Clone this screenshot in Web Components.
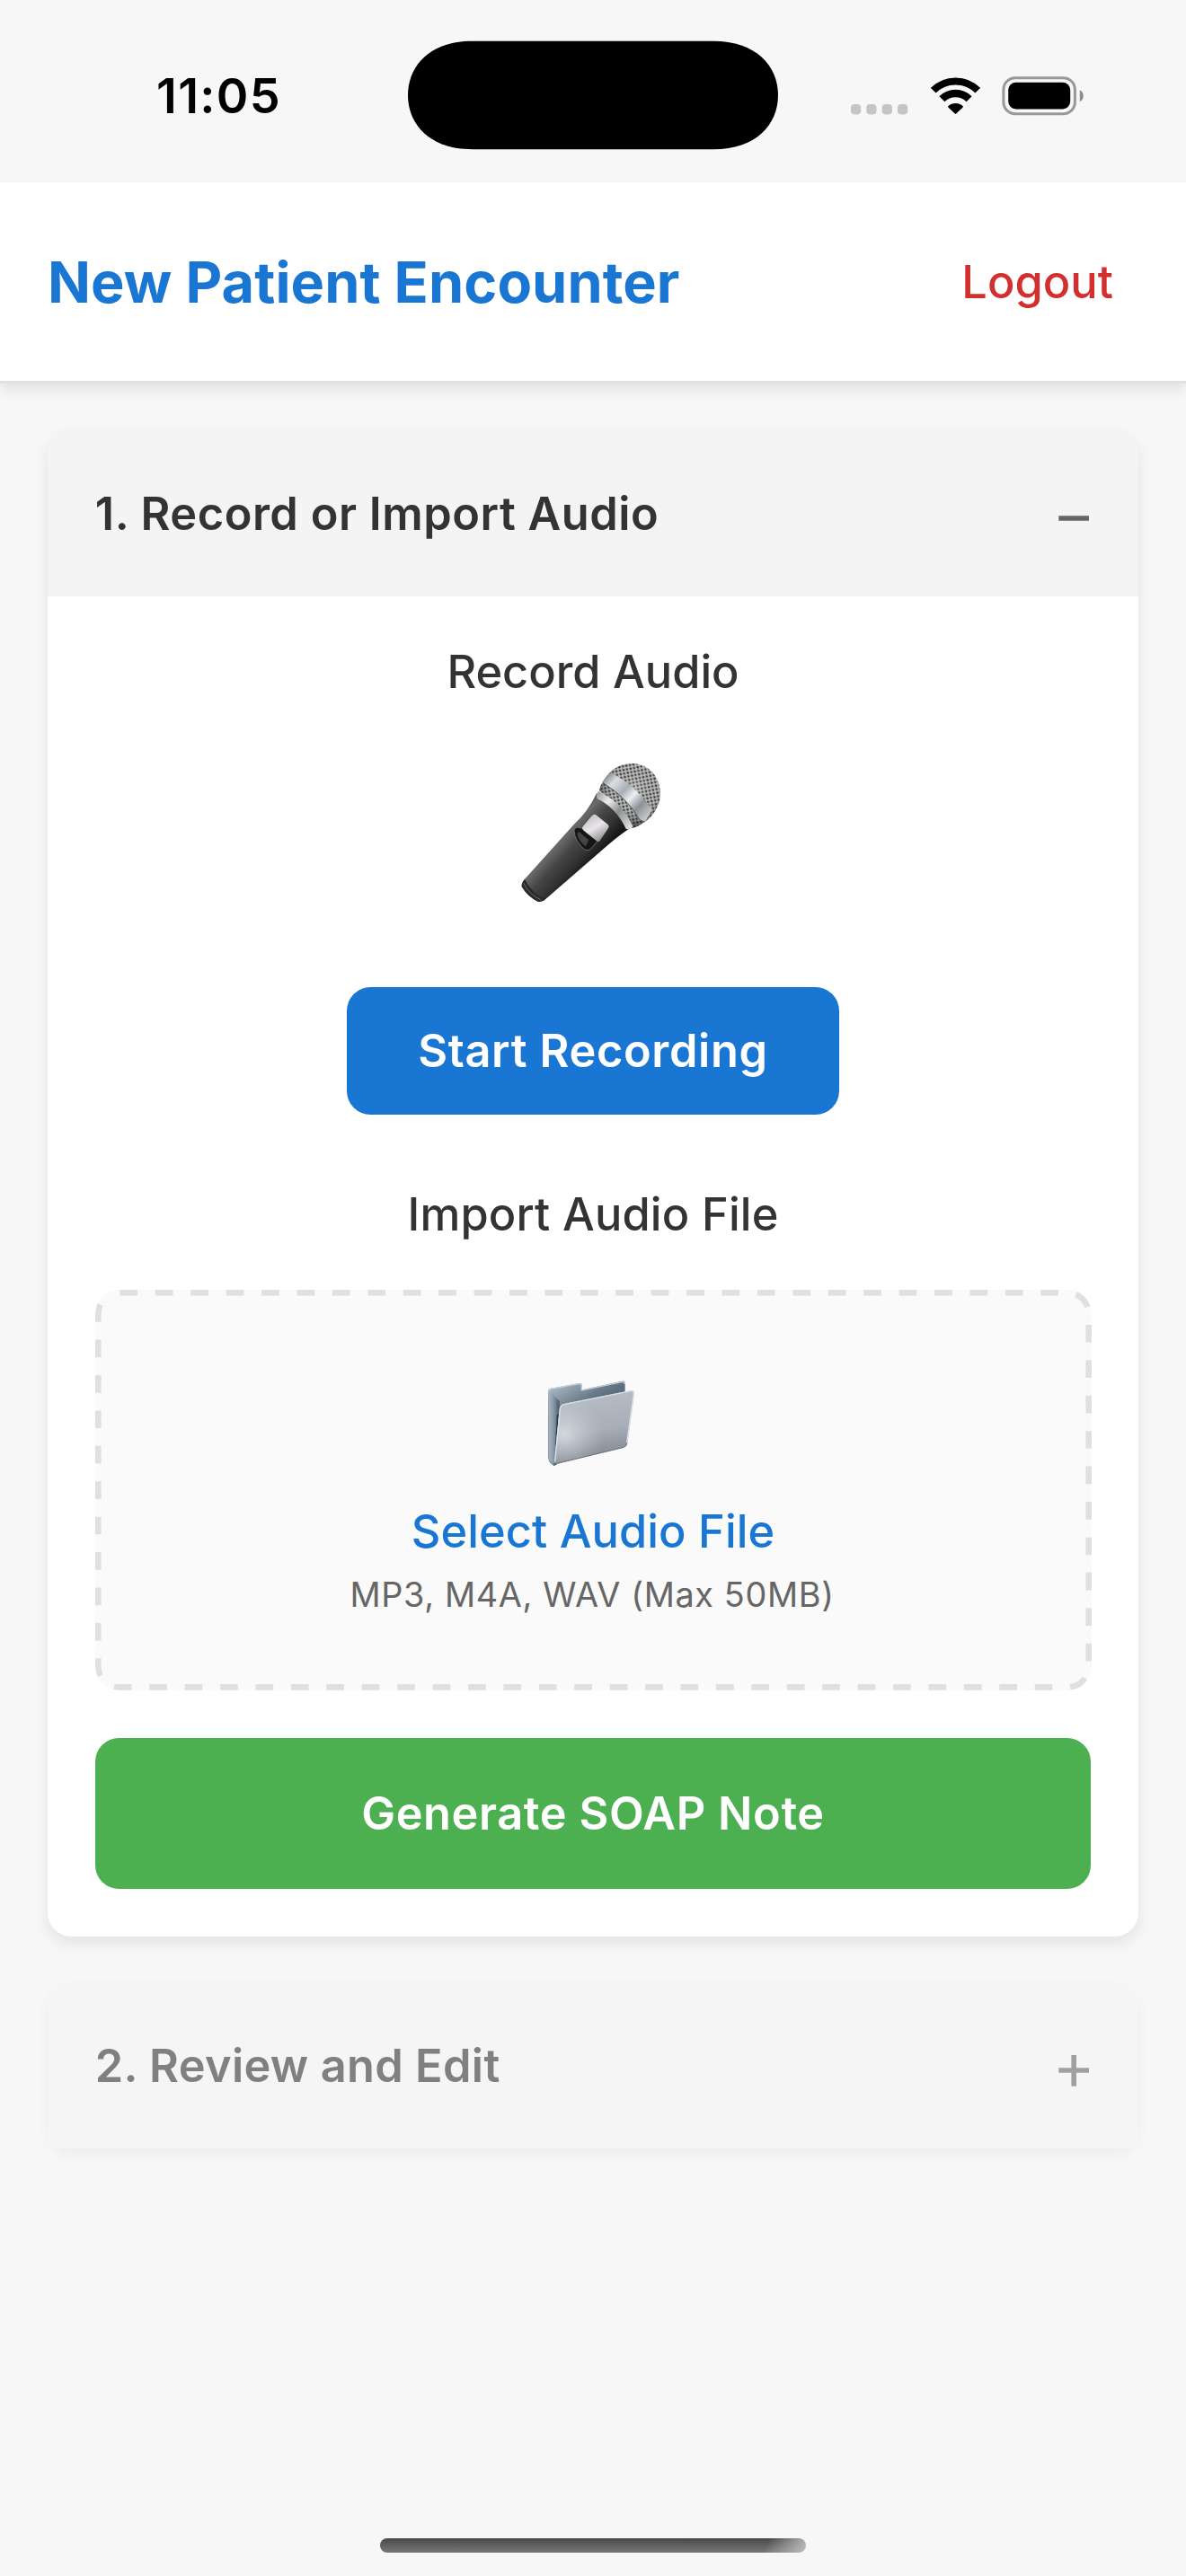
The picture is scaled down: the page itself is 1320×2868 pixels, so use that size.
<!DOCTYPE html>
<html lang="en">
<head>
<meta charset="utf-8">
<title>New Patient Encounter</title>
<style>
html, body { margin: 0; padding: 0; }
body { background: #f7f7f7; font-family: Inter, "Liberation Sans", sans-serif; width: 1320px; height: 2868px; overflow: hidden; }
</style>
</head>
<body>
<encounter-screen></encounter-screen>
<script>
const define = (name, html) => {
  const template = document.createElement('template');
  template.innerHTML = html;
  customElements.define(name, class extends HTMLElement {
    constructor() {
      super();
      this.attachShadow({ mode: 'open' }).append(template.content.cloneNode(true));
    }
  });
};

define('status-bar', `
<style>
:host { display: flex; height: 203px; box-sizing: border-box; align-items: flex-start; flex: none; }
.time { width: 280px; padding: 74px 0 0 174px; box-sizing: border-box; height: 203px; font-size: 54px; font-weight: 600; letter-spacing: 1.32px; line-height: 66px; color: #000; white-space: nowrap; }
.island { margin: 45px 0 0 173px; display: block; }
.icons { display: flex; align-items: flex-start; margin: 85px 0 0 80px; }
svg { display: block; flex: none; }
.dots { margin-top: 31px; }
.wifi { margin: 1px 0 0 25px; }
.battery { margin-left: 24px; }
</style>
<div class="time">11:05</div>
<svg class="island" width="414" height="122" viewBox="0 0 414 122"><path d="M73 .7H341C388 .7 413 28 413 61S388 121.3 341 121.3H73C26 121.3 1 94 1 61S26 .7 73 .7Z" fill="#000"/></svg>
<div class="icons">
<svg class="dots" width="64" height="12" viewBox="0 0 64 12" fill="#c5c5c5"><rect x="0" y="0" width="11.2" height="11.4" rx="3.8"/><rect x="17.3" y="0" width="11.2" height="11.4" rx="3.8"/><rect x="34.7" y="0" width="11.2" height="11.4" rx="3.8"/><rect x="52" y="0" width="11.2" height="11.4" rx="3.8"/></svg>
<svg class="wifi" width="55" height="42" viewBox="0 0 55 42"><g fill="none" stroke="#000"><path d="M2.8 14.7A34.9 34.9 0 0 1 52.2 14.7" stroke-width="8"/><path d="M12.4 24.3A21.3 21.3 0 0 1 42.6 24.3" stroke-width="8.4"/></g><path d="M19.2 32.2A12.2 12.2 0 0 1 35.8 32.2Q36 33 35.4 33.7L28.2 40.6Q27.5 41.3 26.8 40.6L19.6 33.7Q19 33 19.2 32.2Z"/></svg>
<svg class="battery" width="92" height="44" viewBox="0 0 92 44"><rect x="1.9" y="1.7" width="79.5" height="40" rx="13" fill="none" stroke="#989898" stroke-width="3"/><rect x="7.2" y="6.7" width="69" height="29.8" rx="8.5"/><path d="M86.8 15.2Q90.7 17.2 90.7 21.7T86.8 28.2Z" fill="#8c8c8c"/></svg>
</div>`);

define('app-header', `
<style>
:host { display: flex; align-items: center; justify-content: space-between; height: 224.4px; box-sizing: border-box; padding: 1px 81px 0 53px; background: #fff; border-bottom: 3.3px solid #e0e0e0; box-shadow: 0 6.6px 14px rgba(0,0,0,.09); flex: none; }
h1 { margin: 0; color: #1976d2; font-size: 63px; font-weight: 700; line-height: 80px; letter-spacing: .08px; }
.action { color: #d32f2f; font-size: 50.5px; font-weight: 500; line-height: 60px; letter-spacing: .05px; }
</style>
<h1><slot></slot></h1><span class="action"><slot name="action"></slot></span>`);

define('step-card', `
<style>
:host { display: block; background: #fff; border-radius: 26.4px; box-shadow: 0 6.6px 17px rgba(0,0,0,.085); }
header { display: flex; align-items: center; justify-content: space-between; height: 184px; box-sizing: border-box; padding: 1px 52px 0 53px; background: #f4f4f4; border-radius: 26.4px 26.4px 0 0; }
h2 { margin: 0; color: #333; font-size: 50.5px; font-weight: 600; line-height: 60px; letter-spacing: var(--title-spacing, .52px); }
svg { display: block; margin-top: 10px; }
.plus { display: none; }
:host([locked]) { background: none; box-shadow: 0 6.6px 15px rgba(0,0,0,.045); }
:host([locked]) header { background: #f5f5f5; height: 185px; padding-top: 2px; border-radius: 26.4px 26.4px 8px 8px; }
:host([locked]) h2 { color: #808080; --title-spacing: .33px; }
:host([locked]) .plus { display: inline; }
.sign { stroke: #666; }
:host([locked]) .sign { stroke: #a0a0a0; }
</style>
<header><h2><slot name="title"></slot></h2>
<svg class="sign" width="40" height="40" viewBox="0 0 40 40" fill="none" stroke-width="5.6"><path d="M3.3 20H37"/><path class="plus" d="M20.2 3V37.7"/></svg></header>
<slot></slot>`);

define('mic-icon', `
<style>:host { display: block; } svg { display: block; }</style>
<svg width="200" height="200" viewBox="0 0 600 600">
<defs>
<linearGradient id="body" x1="170" y1="330" x2="285" y2="435" gradientUnits="userSpaceOnUse"><stop offset="0" stop-color="#454745"/><stop offset=".18" stop-color="#6a6c6a"/><stop offset=".45" stop-color="#454545"/><stop offset=".72" stop-color="#343333"/><stop offset="1" stop-color="#151515"/></linearGradient>
<linearGradient id="metal" x1="335" y1="130" x2="480" y2="270" gradientUnits="userSpaceOnUse"><stop offset="0" stop-color="#75797e"/><stop offset=".2" stop-color="#d9dee2"/><stop offset=".42" stop-color="#a9afb6"/><stop offset=".58" stop-color="#eceff3"/><stop offset=".78" stop-color="#8c9095"/><stop offset="1" stop-color="#c5c7ca"/></linearGradient>
<linearGradient id="collar" x1="310" y1="190" x2="425" y2="300" gradientUnits="userSpaceOnUse"><stop offset="0" stop-color="#999"/><stop offset=".3" stop-color="#eee"/><stop offset=".6" stop-color="#8b8e92"/><stop offset="1" stop-color="#dcdde0"/></linearGradient>
<linearGradient id="button" x1="285" y1="265" x2="335" y2="350" gradientUnits="userSpaceOnUse"><stop offset="0" stop-color="#c4c2c5"/><stop offset=".45" stop-color="#e8e6e9"/><stop offset="1" stop-color="#838185"/></linearGradient>
<radialGradient id="shade" cx="440" cy="170" r="120" gradientUnits="userSpaceOnUse"><stop offset="0" stop-color="#fff" stop-opacity=".22"/><stop offset=".6" stop-color="#777" stop-opacity="0"/><stop offset="1" stop-color="#111" stop-opacity=".48"/></radialGradient>
<pattern id="mesh" width="17" height="17" patternUnits="userSpaceOnUse" patternTransform="rotate(34)"><rect width="17" height="17" fill="#b9bab8"/><rect x="1" y="1" width="7.6" height="6.2" rx="2" fill="#252725"/><rect x="9.5" y="9.5" width="7.2" height="6.2" rx="2" fill="#303230"/></pattern>
<clipPath id="ball"><path d="M320 180Q330 145 365 112Q396 88 435 90Q485 94 510 135Q531 175 522 215Q511 254 480 280Q455 300 431 306Q385 224 320 180Z"/></clipPath>
</defs>
<path d="M312 190Q284 250 238 292L74 474Q61 488 62 502Q82 536 116 551Q130 554 142 543L350 362Q390 328 424 306Q386 226 312 190Z" fill="url(#body)"/>
<path d="M72 476Q60 490 62 501Q85 537 116 551Q130 554 142 543Q96 526 72 476Z" fill="#292a29"/>
<path d="M67 488Q87 529 127 546" fill="none" stroke="#686a68" stroke-width="3"/>
<g clip-path="url(#ball)">
<rect x="300" y="80" width="240" height="240" fill="url(#mesh)"/>
<rect x="300" y="80" width="240" height="240" fill="url(#shade)"/>
<path d="M330 128Q350 115 374 129Q448 171 498 244L474 284L454 276Q414 206 332 154Z" fill="url(#metal)"/>
<path d="M332 154Q414 204 456 278" fill="none" stroke="#55585b" stroke-width="3"/>
</g>
<path d="M320 183Q309 190 313 207Q376 237 410 308Q422 314 433 301Q399 221 320 183Z" fill="url(#collar)"/>
<path d="M237 315Q236 307 247 303L267 307L316 348L291 377Q282 384 271 377Q240 350 237 315Z" fill="#151515" stroke="#777" stroke-width="2.5"/>
<path d="M253 318L286 346L275 367Q251 349 247 325Z" fill="#454345"/>
<path d="M309 261L350 294Q356 300 351 306L323 348Q318 354 311 348L269 314Q261 308 266 301L297 264Q303 258 309 261Z" fill="url(#button)"/>
</svg>`);

define('folder-icon', `
<style>:host { display: block; } svg { display: block; }</style>
<svg width="160" height="150" viewBox="0 0 480 450">
<defs>
<linearGradient id="back" x1="100" y1="110" x2="230" y2="330" gradientUnits="userSpaceOnUse"><stop offset="0" stop-color="#a7b4bf"/><stop offset=".35" stop-color="#667887"/><stop offset="1" stop-color="#2f4353"/></linearGradient>
<linearGradient id="edge" x1="92" y1="0" x2="128" y2="0" gradientUnits="userSpaceOnUse"><stop offset="0" stop-color="#aab7c1"/><stop offset=".5" stop-color="#8494a0"/><stop offset="1" stop-color="#42586a"/></linearGradient>
<linearGradient id="front" x1="230" y1="140" x2="265" y2="335" gradientUnits="userSpaceOnUse"><stop offset="0" stop-color="#b4bbc4"/><stop offset=".55" stop-color="#a9afb9"/><stop offset="1" stop-color="#858a93"/></linearGradient>
<radialGradient id="glow" cx="145" cy="260" r="130" gradientUnits="userSpaceOnUse"><stop offset="0" stop-color="#e2e6ea" stop-opacity=".75"/><stop offset="1" stop-color="#c2c8d0" stop-opacity="0"/></radialGradient>
</defs>
<path d="M98 107L193 90Q203 88 204 99V112L337 83Q347 81 347 92V230L110 366Q92 356 91 340L90 118Q90 109 98 107Z" fill="url(#back)"/>
<path d="M92 116L128 150V174L110 364Q92 353 92 338Z" fill="url(#edge)"/>
<path d="M92 119Q92 111 99 109L194 92Q202 91 202 101V114L337 86Q345 84 345 93" fill="none" stroke="#c5d0d9" stroke-width="4"/>
<path d="M122 195L116 315" stroke="#24394a" stroke-width="5"/>
<path id="face" d="M142 159L367 114Q380 112 378 127L355 289Q353 302 343 305L119 360Q109 362 111 348L128 176Q130 162 142 159Z" fill="url(#front)"/>
<path d="M142 159L367 114Q380 112 378 127L355 289Q353 302 343 305L119 360Q109 362 111 348L128 176Q130 162 142 159Z" fill="url(#glow)"/>
<path d="M113 352L130 178Q132 164 143 161L367 116Q378 114 376 127L353 289" fill="none" stroke="#dce1e6" stroke-width="4"/>
<path d="M114 359L343 304Q352 301 354 289" fill="none" stroke="#737982" stroke-width="3"/>
</svg>`);

define('action-button', `
<style>
:host { display: flex; align-items: center; justify-content: center; border-radius: 26.4px; background: var(--fill); color: #fff; font-size: 50.5px; font-weight: 600; line-height: 60px; }
</style><slot></slot>`);

define('section-title', `
<style>
:host { display: block; text-align: center; color: #333; font-size: 50.5px; font-weight: 500; line-height: 60px; }
</style><slot></slot>`);

define('file-drop', `
<style>
:host { display: grid; width: 1109px; height: 445.7px; border-radius: 26.4px; background: #fafafa; overflow: hidden; }
.frame, .content { grid-area: 1 / 1; }
.frame { display: block; }
.content { display: flex; flex-direction: column; align-items: center; padding-top: 74px; }
.label { margin-top: 15px; color: #1976d2; font-size: 50.5px; font-weight: 500; line-height: 60px; letter-spacing: .06px; }
.hint { margin-top: 17px; color: #666; font-size: 37.8px; line-height: 46px; letter-spacing: .645px; padding-right: 2px; }
</style>
<svg class="frame" width="1109" height="445.7" viewBox="0 0 1109 445.7" fill="none"><path d="M27.4 3.3H1082.6A23.1 23.1 0 0 1 1105.7 26.4V419.3A23.1 23.1 0 0 1 1082.6 442.4H26.4A23.1 23.1 0 0 1 3.3 419.3V26.4A23.1 23.1 0 0 1 10.1 10.1" stroke="#e0e0e0" stroke-width="6.6" stroke-dasharray="19.71 19.71"/></svg>
<div class="content"><folder-icon></folder-icon><div class="label"><slot name="label"></slot></div><div class="hint"><slot name="hint"></slot></div></div>`);

define('home-indicator', `
<style>
:host { display: block; flex: none; width: 473.5px; height: 16.5px; margin: auto auto 26px; border-radius: 8.3px; background: linear-gradient(115deg, transparent 90%, rgba(185,185,185,.95) 99%), linear-gradient(180deg, #484848, #777); }
</style>`);

define('encounter-screen', `
<style>
:host { display: flex; flex-direction: column; height: 2868px; background: #f7f7f7; }
main { display: flex; flex-direction: column; gap: 51px; padding: 52.6px 52.8px 0; }
.panel { display: flex; flex-direction: column; align-items: center; padding: 54px 52.8px 53.3px; }
mic-icon { margin-top: 42px; }
.start { --fill: #1976d2; width: 548px; height: 142px; margin-top: 79.3px; letter-spacing: .63px; }
.import { margin-top: 80.4px; letter-spacing: .16px; }
file-drop { margin-top: 54.3px; }
.generate { --fill: #4caf50; align-self: stretch; height: 167.7px; margin-top: 53.3px; letter-spacing: .59px; }
</style>
<status-bar></status-bar>
<app-header>New Patient Encounter<span slot="action">Logout</span></app-header>
<main>
<step-card><span slot="title">1. Record or Import Audio</span>
<div class="panel">
<section-title>Record Audio</section-title>
<mic-icon></mic-icon>
<action-button class="start">Start Recording</action-button>
<section-title class="import">Import Audio File</section-title>
<file-drop><span slot="label">Select Audio File</span><span slot="hint">MP3, M4A, WAV (Max 50MB)</span></file-drop>
<action-button class="generate">Generate SOAP Note</action-button>
</div></step-card>
<step-card locked><span slot="title">2. Review and Edit</span></step-card>
</main>
<home-indicator></home-indicator>`);
</script>
</body>
</html>
